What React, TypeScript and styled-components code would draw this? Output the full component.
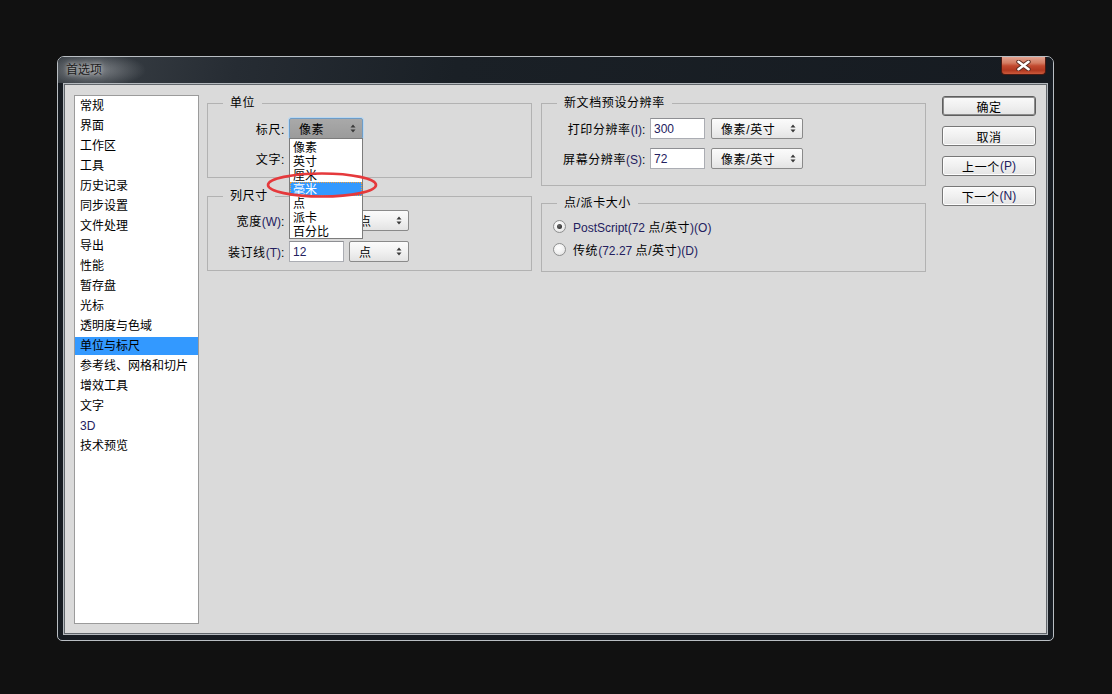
import React from "react";
import styled, { createGlobalStyle } from "styled-components";

const GlobalStyle = createGlobalStyle`
  html, body {
    margin: 0;
    padding: 0;
    background: #111111;
  }
  body {
    font-family: "Liberation Sans", "Noto Sans CJK SC", sans-serif;
    font-size: 12px;
    color: #000;
  }
`;

const Screen = styled.div`
  width: 1112px;
  height: 694px;
  box-sizing: border-box;
  padding: 56px 0 0 57px;
  background: #111111;
`;

const Window = styled.div`
  width: 997px;
  height: 585px;
  box-sizing: border-box;
  display: flex;
  flex-direction: column;
  border: 1px solid #b9bec3;
  border-radius: 7px 7px 5px 5px;
  background: #171c22;
  overflow: hidden;
`;

const TitleBar = styled.div`
  height: 26px;
  flex: none;
  display: flex;
  justify-content: space-between;
  align-items: flex-start;
  background:
    radial-gradient(ellipse 52px 17px at 36px 13px, rgba(175, 178, 182, 0.6), rgba(175, 178, 182, 0) 100%),
    linear-gradient(100deg, #3c4248 0%, #262c33 18%, #1a2026 40%, #161b21 100%);
`;

const Title = styled.div`
  padding: 6px 0 0 8px;
  line-height: 14px;
  color: #1b1b1b;
  text-shadow: 0 0 4px rgba(220, 220, 220, 0.9), 0 0 8px rgba(190, 190, 190, 0.6);
`;

const CloseButton = styled.div`
  width: 45px;
  height: 18px;
  margin-right: 7px;
  box-sizing: border-box;
  display: flex;
  align-items: center;
  justify-content: center;
  border: 1px solid #4a1a12;
  border-top: none;
  border-radius: 0 0 4px 4px;
  background: linear-gradient(#e2a290 0%, #d47c62 35%, #c24a30 52%, #b03820 78%, #cc5a3c 100%);
`;

const Client = styled.div`
  flex: 1;
  margin: 0 5px 5px;
  display: flex;
  align-items: stretch;
  padding: 11px 10px 10px 10px;
  background: #dadada;
  border: 1px solid #b4b9be;
  box-shadow: inset 0 0 0 1px #62676c;
`;

const CategoryList = styled.ul`
  width: 125px;
  flex: none;
  box-sizing: border-box;
  margin: 0;
  padding: 1px 0 0;
  list-style: none;
  background: #fff;
  border: 1px solid #9b9b9b;
`;

const CategoryItem = styled.li<{ $selected?: boolean }>`
  height: 18px;
  line-height: 19px;
  margin-bottom: 2px;
  padding-left: 5px;
  white-space: nowrap;
  background: ${(p) => (p.$selected ? "#3399ff" : "transparent")};
`;

const Settings = styled.div`
  margin: 1px 0 0 8px;
  display: grid;
  grid-template-columns: 325px 385px;
  column-gap: 9px;
  align-items: start;
  letter-spacing: 0.6px;
`;

const Column = styled.div<{ $gap: number }>`
  display: flex;
  flex-direction: column;
  gap: ${(p) => p.$gap}px;
`;

const Group = styled.fieldset<{ $pad: string; $gap: number }>`
  margin: 0;
  min-width: 0;
  padding: ${(p) => p.$pad};
  border: 1px solid #b2b2b2;
  display: flex;
  flex-direction: column;
  gap: ${(p) => p.$gap}px;
`;

const Legend = styled.legend`
  margin-left: 15px;
  padding: 0 7px;
  line-height: 14px;
  font-size: 12px;
`;

const FormRow = styled.div<{ $labelWidth: number }>`
  display: grid;
  grid-template-columns: ${(p) => p.$labelWidth}px auto;
  column-gap: 4px;
  align-items: center;
  height: 21px;
`;

const Label = styled.div`
  text-align: right;
  white-space: nowrap;
`;

const Controls = styled.div<{ $gap: number }>`
  display: flex;
  align-items: center;
  gap: ${(p) => p.$gap}px;
`;

const Lat = styled.span`
  color: #23205e;
  letter-spacing: 0;
`;

const TextField = styled.input`
  width: 55px;
  height: 21px;
  box-sizing: border-box;
  margin: 0;
  padding: 0 3px;
  border: 1px solid #abadb3;
  border-top-color: #8e8f93;
  background: #fff;
  font: inherit;
  letter-spacing: 0;
  color: #23205e;
  outline: none;
`;

const SelectBox = styled.div<{ $w: number; $open?: boolean }>`
  position: relative;
  width: ${(p) => p.$w}px;
  height: 21px;
  box-sizing: border-box;
  display: flex;
  align-items: center;
  justify-content: space-between;
  padding: 0 6px 0 9px;
  border: 1px solid ${(p) => (p.$open ? "#6f9cc6" : "#8a8a8a")};
  border-radius: 2px;
  background: ${(p) =>
    p.$open
      ? "linear-gradient(#a9a9a9, #9b9b9b)"
      : "linear-gradient(#fbfbfb 0%, #f1f1f1 50%, #e3e3e3 100%)"};
  box-shadow: ${(p) => (p.$open ? "0 0 0 1px #b9d8f2" : "none")};
  white-space: nowrap;
`;

const DropList = styled.ul`
  position: absolute;
  top: 100%;
  left: -1px;
  right: -1px;
  z-index: 5;
  margin: 0;
  padding: 1px 0 0;
  list-style: none;
  background: #fff;
  border: 1px solid #7c7c7c;
  letter-spacing: 0;
`;

const DropOption = styled.li<{ $selected?: boolean }>`
  height: 14px;
  line-height: 16px;
  padding-left: 3px;
  color: ${(p) => (p.$selected ? "#fff" : "#000")};
  background: ${(p) => (p.$selected ? "#3399ff" : "transparent")};
  outline: ${(p) => (p.$selected ? "1px dotted #f0a040" : "none")};
  outline-offset: -1px;
  overflow: hidden;
`;

const Annotation = styled.svg`
  position: absolute;
  left: -26px;
  top: 31px;
  z-index: 6;
  overflow: visible;
`;

const RadioRow = styled.div`
  display: flex;
  align-items: center;
  gap: 7px;
  height: 16px;
  padding-left: 11px;
  white-space: nowrap;
`;

const Radio = styled.span<{ $checked?: boolean }>`
  position: relative;
  width: 13px;
  height: 13px;
  box-sizing: border-box;
  border-radius: 50%;
  border: 1px solid #8e8f8f;
  background: radial-gradient(circle at 40% 35%, #ffffff 0%, #f1f1f1 50%, #d9d9d9 100%);

  &::after {
    content: "";
    display: ${(p) => (p.$checked ? "block" : "none")};
    position: absolute;
    left: 3px;
    top: 3px;
    width: 5px;
    height: 5px;
    border-radius: 50%;
    background: radial-gradient(circle at 40% 35%, #6a6a6a, #1e1e1e);
  }
`;

const ButtonColumn = styled.div`
  width: 94px;
  flex: none;
  margin-left: 16px;
  padding-top: 1px;
  display: flex;
  flex-direction: column;
  gap: 10px;
  letter-spacing: 0.6px;
`;

const DialogButton = styled.div<{ $default?: boolean }>`
  height: 20px;
  box-sizing: border-box;
  display: flex;
  align-items: center;
  justify-content: center;
  border: 1px solid ${(p) => (p.$default ? "#5e5e5e" : "#777777")};
  border-radius: 3px;
  background: linear-gradient(#fafafa 0%, #f0f0f0 50%, #e4e4e4 100%);
  box-shadow: ${(p) => (p.$default ? "inset 0 0 0 1px #8c8c8c" : "inset 0 0 0 1px #fdfdfd")};
  white-space: nowrap;
`;

const UpDown = () => (
  <svg width="6" height="9" viewBox="0 0 6 9">
    <path d="M3 0.5 L5.5 3.5 H0.5 Z M3 8.5 L5.5 5.5 H0.5 Z" fill="#3a3a3a" />
  </svg>
);

const CloseGlyph = () => (
  <svg width="15" height="11" viewBox="0 0 15 11">
    <path d="M2.5 1.8 L12.5 9.2 M12.5 1.8 L2.5 9.2" stroke="#5a2a20" strokeWidth="4.4" strokeLinecap="round" />
    <path d="M2.5 1.8 L12.5 9.2 M12.5 1.8 L2.5 9.2" stroke="#ffffff" strokeWidth="2.6" strokeLinecap="round" />
  </svg>
);

const categories = [
  "常规",
  "界面",
  "工作区",
  "工具",
  "历史记录",
  "同步设置",
  "文件处理",
  "导出",
  "性能",
  "暂存盘",
  "光标",
  "透明度与色域",
  "单位与标尺",
  "参考线、网格和切片",
  "增效工具",
  "文字",
  "3D",
  "技术预览",
];

const units = ["像素", "英寸", "厘米", "毫米", "点", "派卡", "百分比"];

export default function App() {
  return (
    <Screen>
      <GlobalStyle />
      <Window>
        <TitleBar>
          <Title>首选项</Title>
          <CloseButton>
            <CloseGlyph />
          </CloseButton>
        </TitleBar>
        <Client>
          <CategoryList>
            {categories.map((c) => (
              <CategoryItem key={c} $selected={c === "单位与标尺"}>
                {c === "3D" ? <Lat>3D</Lat> : c}
              </CategoryItem>
            ))}
          </CategoryList>

          <Settings>
            <Column $gap={11}>
              <Group $pad="8px 0 8px" $gap={9}>
                <Legend>单位</Legend>
                <FormRow $labelWidth={77}>
                  <Label>标尺:</Label>
                  <Controls $gap={5}>
                    <SelectBox $w={74} $open>
                      <span>像素</span>
                      <UpDown />
                      <DropList>
                        {units.map((u) => (
                          <DropOption key={u} $selected={u === "毫米"}>
                            {u}
                          </DropOption>
                        ))}
                        <Annotation width="116" height="30" viewBox="0 0 116 30">
                          <ellipse cx="58" cy="15" rx="54" ry="11.5" fill="none" stroke="#e5393c" strokeWidth="2.6" />
                        </Annotation>
                      </DropList>
                    </SelectBox>
                  </Controls>
                </FormRow>
                <FormRow $labelWidth={77}>
                  <Label>文字:</Label>
                  <Controls $gap={5}>
                    {/* covered by the open ruler list */}
                    <SelectBox $w={74}>
                      <span />
                      <UpDown />
                    </SelectBox>
                  </Controls>
                </FormRow>
              </Group>

              <Group $pad="7px 0 8px" $gap={10}>
                <Legend>列尺寸</Legend>
                <FormRow $labelWidth={77}>
                  <Label>
                    宽度<Lat>(W)</Lat>:
                  </Label>
                  <Controls $gap={5}>
                    <TextField defaultValue="" />
                    <SelectBox $w={60}>
                      <span>点</span>
                      <UpDown />
                    </SelectBox>
                  </Controls>
                </FormRow>
                <FormRow $labelWidth={77}>
                  <Label>
                    装订线<Lat>(T)</Lat>:
                  </Label>
                  <Controls $gap={5}>
                    <TextField defaultValue="12" />
                    <SelectBox $w={60}>
                      <span>点</span>
                      <UpDown />
                    </SelectBox>
                  </Controls>
                </FormRow>
              </Group>
            </Column>

            <Column $gap={10}>
              <Group $pad="8px 0 16px" $gap={9}>
                <Legend>新文档预设分辨率</Legend>
                <FormRow $labelWidth={104}>
                  <Label>
                    打印分辨率<Lat>(I)</Lat>:
                  </Label>
                  <Controls $gap={6}>
                    <TextField defaultValue="300" />
                    <SelectBox $w={92}>
                      <span>像素/英寸</span>
                      <UpDown />
                    </SelectBox>
                  </Controls>
                </FormRow>
                <FormRow $labelWidth={104}>
                  <Label>
                    屏幕分辨率<Lat>(S)</Lat>:
                  </Label>
                  <Controls $gap={6}>
                    <TextField defaultValue="72" />
                    <SelectBox $w={92}>
                      <span>像素/英寸</span>
                      <UpDown />
                    </SelectBox>
                  </Controls>
                </FormRow>
              </Group>

              <Group $pad="8px 0 14px" $gap={7}>
                <Legend>点/派卡大小</Legend>
                <RadioRow>
                  <Radio $checked />
                  <span>
                    <Lat>PostScript(72 </Lat>点/英寸<Lat>)(O)</Lat>
                  </span>
                </RadioRow>
                <RadioRow>
                  <Radio />
                  <span>
                    传统<Lat>(72.27 </Lat>点/英寸<Lat>)(D)</Lat>
                  </span>
                </RadioRow>
              </Group>
            </Column>
          </Settings>

          <ButtonColumn>
            <DialogButton $default>确定</DialogButton>
            <DialogButton>取消</DialogButton>
            <DialogButton>
              上一个<Lat>(P)</Lat>
            </DialogButton>
            <DialogButton>
              下一个<Lat>(N)</Lat>
            </DialogButton>
          </ButtonColumn>
        </Client>
      </Window>
    </Screen>
  );
}
